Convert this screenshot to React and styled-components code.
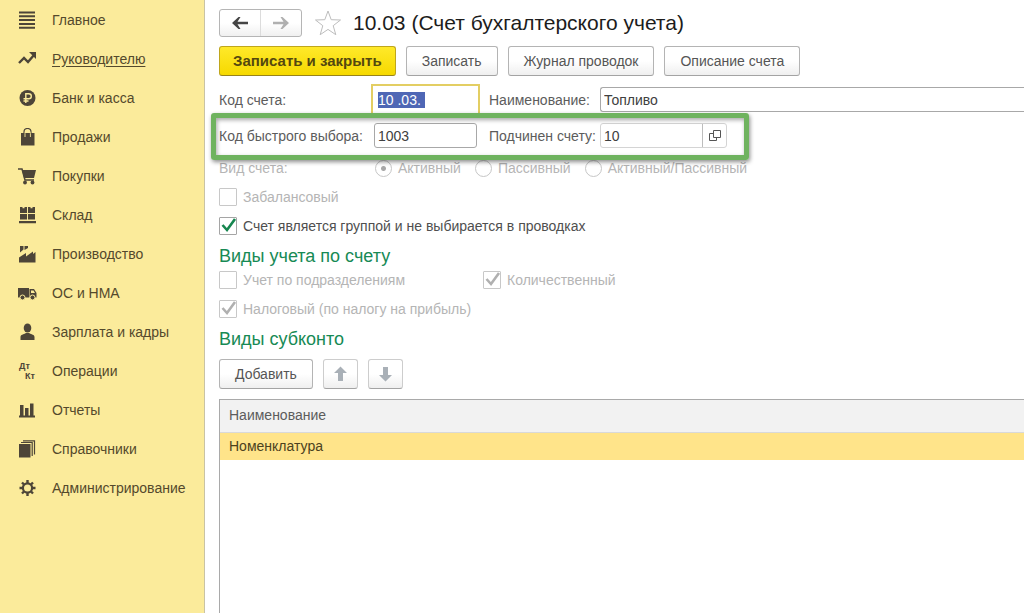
import React, { useEffect, useRef } from 'react';
import styled, { createGlobalStyle } from 'styled-components';

const GlobalStyle = createGlobalStyle`
  * {
    box-sizing: border-box;
  }

  body {
    margin: 0;
    background: #fff;
    color: #4a4a4a;
    font-family: "Liberation Sans", Arial, sans-serif;
    font-size: 14px;
    line-height: 18px;
  }

  button,
  input {
    font: inherit;
    color: inherit;
    margin: 0;
  }
`;

const Page = styled.div`
  display: flex;
  min-height: 100vh;
`;

const Sidebar = styled.nav`
  flex: 0 0 205px;
  background: #fbeb9b;
  border-right: 1px solid #c9c3a4;
`;

const MenuItem = styled.a`
  display: flex;
  align-items: center;
  gap: 15px;
  height: 39px;
  padding-left: 18px;
  color: #54492c;
  text-decoration: ${(props) => (props.$active ? 'underline' : 'none')};
  text-underline-offset: 2px;
  white-space: nowrap;
`;

const MenuIcon = styled.svg`
  flex: none;
  width: 19px;
  height: 18px;
  fill: #4d4538;
`;

const Main = styled.main`
  flex: 1;
  min-width: 0;
  display: flex;
  flex-direction: column;
  padding: 9px 0 0 14px;
`;

const Header = styled.header`
  display: flex;
  align-items: center;
  height: 28px;
`;

const NavButtons = styled.div`
  display: flex;
  width: 83px;
  height: 28px;
  border: 1px solid #b5b5b5;
  border-radius: 3px;
  background: linear-gradient(#fff 50%, #f0f0f0);
`;

const NavButton = styled.button`
  flex: 1;
  display: flex;
  align-items: center;
  justify-content: center;
  padding: 0;
  border: none;
  background: none;

  & + & {
    border-left: 1px solid #dcdcdc;
  }
`;

const StarButton = styled.button`
  display: flex;
  margin-left: 12px;
  padding: 0;
  border: none;
  background: none;
`;

const Title = styled.h1`
  margin: 0 0 0 11px;
  color: #1c1c1c;
  font-size: 21px;
  font-weight: normal;
  line-height: 24px;
  white-space: nowrap;
`;

const Toolbar = styled.div`
  display: flex;
  gap: 10px;
  margin-top: ${(props) => props.$top}px;
`;

const Button = styled.button`
  display: flex;
  align-items: center;
  justify-content: center;
  height: 30px;
  padding: 0 ${(props) => (props.$icon ? 8 : 15)}px;
  border: 1px solid ${(props) => (props.$icon ? '#cdcdcd' : '#b4b4b4')};
  border-bottom-color: #a3a3a3;
  border-radius: 3px;
  background: linear-gradient(#fff 50%, #efefef);
  color: #555;
  white-space: nowrap;
`;

const PrimaryButton = styled(Button)`
  padding: 0 13px;
  border-color: #bfa61c;
  border-bottom-color: #97831b;
  background: linear-gradient(#ffe92a, #f6d900);
  color: #54480f;
  font-size: 15px;
  font-weight: bold;
`;

const Row = styled.div`
  position: relative;
  display: grid;
  grid-template-columns: 155px 103px 123px minmax(0, 1fr);
  align-items: center;
  height: 25px;
  margin-top: 11px;
`;

const Highlight = styled.div`
  position: absolute;
  z-index: 1;
  top: -10px;
  left: -8px;
  width: 538px;
  height: 47px;
  border: 5px solid #6fb35f;
  border-radius: 3px;
  box-shadow: 1px 2px 4px rgba(0, 0, 0, 0.45), inset 1px 2px 4px rgba(0, 0, 0, 0.35);
  pointer-events: none;
`;

const Label = styled.label`
  padding-left: ${(props) => (props.$second ? 12 : 0)}px;
  color: #5c5c5c;
  white-space: nowrap;
`;

const TextInput = styled.input`
  width: 100%;
  height: 25px;
  padding: 0 3px;
  border: 1px solid ${(props) => (props.$current ? '#fff' : '#a8a8a8')};
  border-radius: ${(props) => (props.$current ? 0 : 3)}px;
  background: #fff;
  color: #404040;
  outline: ${(props) => (props.$current ? '2px solid #e3ce63' : 'none')};
  outline-offset: 1px;

  &::selection {
    background: #4f67b5;
    color: #fff;
  }
`;

const WideInput = styled(TextInput)`
  border-right: none;
  border-radius: 3px 0 0 3px;
`;

const FieldGroup = styled.div`
  display: flex;
  width: 127px;
  height: 25px;
  border: 1px solid #d4d4d4;
  border-radius: 3px;
`;

const GroupInput = styled.input`
  flex: 1;
  min-width: 0;
  padding: 0 3px;
  border: none;
  background: none;
  color: #404040;
  outline: none;
`;

const OpenButton = styled.button`
  display: flex;
  align-items: center;
  justify-content: center;
  width: 24px;
  padding: 0;
  border: none;
  border-left: 1px solid #bdbdbd;
  background: none;
`;

const RadioRow = styled.fieldset`
  display: flex;
  align-items: center;
  height: 18px;
  margin: 11px 0 5px;
  padding: 0;
  border: none;
  color: #b5b5b5;
`;

const RadioCaption = styled.span`
  width: 156px;
`;

const RadioLabel = styled.label`
  display: flex;
  align-items: center;
  gap: 6px;
  margin-right: 14px;
  white-space: nowrap;
`;

const Radio = styled.input`
  appearance: none;
  width: 17px;
  height: 17px;
  border: 1px solid #c6c6c6;
  border-radius: 50%;
  background: #fff;

  &:checked {
    background: radial-gradient(circle, #a8a8a8 2px, #fff 3px);
  }
`;

const CheckLabel = styled.label`
  display: flex;
  align-items: center;
  gap: 6px;
  height: 29px;
  color: ${(props) => (props.$disabled ? '#b5b5b5' : '#4f4f4f')};
  white-space: nowrap;
`;

const CheckBox = styled.span`
  position: relative;
  display: flex;
  width: 18px;
  height: 18px;

  input {
    appearance: none;
    width: 18px;
    height: 18px;
    border: 1px solid ${(props) => (props.$disabled ? '#c8c8c8' : '#a5a5a5')};
    border-radius: 1px;
    background: #fff;
  }

  svg {
    position: absolute;
    top: 0;
    left: 0;
    pointer-events: none;
  }
`;

const CheckGrid = styled.div`
  display: grid;
  grid-template-columns: 264px minmax(0, 1fr);
`;

const Section = styled.h2`
  margin: 7px 0 0;
  color: #178a55;
  font-size: 18px;
  font-weight: normal;
  line-height: 18px;
`;

const TableBox = styled.div`
  flex: 1;
  margin-top: 10px;
  border-top: 1px solid #a9a9a9;
  border-left: 1px solid #a9a9a9;
`;

const Table = styled.table`
  width: 100%;
  border-collapse: collapse;

  th,
  td {
    padding: 0 9px;
    text-align: left;
    font-weight: normal;
  }

  th {
    height: 32px;
    padding-bottom: 2px;
    background: #f2f2f2;
    border-bottom: 1px solid #d9d9d9;
    color: #5c5c5c;
  }

  td {
    height: 28px;
    background: #ffe48a;
    color: #4c4220;
  }
`;

const menu = [
  {
    title: 'Главное',
    icon: <path d="M1 .5h16v2H1zM1 4.3h16v2H1zM1 8.100h16v2H1zM1 11.900h16v2H1zM1 15.700h16v2H1z" />,
  },
  {
    title: 'Руководителю',
    active: true,
    icon: (
      <>
        <path d="M1 13l5-5 4 4 6-7" fill="none" stroke="#4d4538" strokeWidth="2.4" />
        <path d="M11 2h7v7z" />
      </>
    ),
  },
  {
    title: 'Банк и касса',
    icon: (
      <>
        <circle cx="9.5" cy="9" r="8" />
        <path
          d="M7.8 14V4.8h3a2.4 2.4 0 0 1 0 5H5.5M5.5 12h5"
          fill="none"
          stroke="#fbeb9b"
          strokeWidth="1.4"
        />
      </>
    ),
  },
  {
    title: 'Продажи',
    icon: (
      <>
        <path d="M3 5h13.500v12.500H3z" />
        <path d="M6 8V4a3.500 3.500 0 0 1 7 0v4" fill="none" stroke="#4d4538" strokeWidth="1.2" />
        <path d="M7 9V5.500a2.700 2.700 0 0 1 5.400 0V9" fill="none" stroke="#fbeb9b" strokeWidth="0.9" />
      </>
    ),
  },
  {
    title: 'Покупки',
    icon: (
      <>
        <path d="M4 3h14l-2 8H6z" />
        <path d="M0 2h4l3 11h9" fill="none" stroke="#4d4538" strokeWidth="1.5" />
        <circle cx="7" cy="15.5" r="1.9" />
        <circle cx="14.5" cy="15.5" r="1.9" />
      </>
    ),
  },
  {
    title: 'Склад',
    icon: (
      <>
        <path d="M2 1h7v6H2zM10 1h7v6h-7zM2 8h7v5.500H2zM10 8h7v5.500h-7zM1 15h17v2.200H1z" />
        <path d="M4.500 1h2v1.200h-2zM12.500 1h2v1.200h-2z" fill="#fbeb9b" />
      </>
    ),
  },
  {
    title: 'Производство',
    icon: <path d="M1 17.500v-5l7-4.500v3.500l7-5V9l2.500-2v10.500zM2 1h3.500v3.500L2 7.500zM6.500 1H10v2L6.500 5z" />,
  },
  {
    title: 'ОС и НМА',
    icon: (
      <>
        <path d="M0 4h11v9.500H0z" />
        <path d="M11.500 5h4.500l2.500 4v4.500h-7z" />
        <path d="M13 6.500h2.500l1.500 2.500h-4z" fill="#fbeb9b" />
        <circle cx="4.5" cy="13.5" r="2.5" stroke="#fbeb9b" />
        <circle cx="14.5" cy="13.5" r="2.5" stroke="#fbeb9b" />
      </>
    ),
  },
  {
    title: 'Зарплата и кадры',
    icon: (
      <>
        <ellipse cx="9.5" cy="5" rx="3.8" ry="4.500" />
        <path d="M2.500 17v-3c0-2.500 3-2.500 5.500-4h3c2.500 1.500 5.500 1.500 5.500 4v3z" />
      </>
    ),
  },
  {
    title: 'Операции',
    icon: (
      <g fontSize="9" fontWeight="bold">
        <text x="1" y="7">Дт</text>
        <text x="7" y="17">Кт</text>
      </g>
    ),
  },
  {
    title: 'Отчеты',
    icon: <path d="M2 4h3.500v11H2zM7 7h3.500v8H7zM12 2.500h3.500V15H12zM1 14.500h16v2H1z" />,
  },
  {
    title: 'Справочники',
    icon: (
      <>
        <path d="M1 4h11.500v13.500H1z" />
        <path d="M3 2.500h11.200V16M5 .8h11.500V14.500" fill="none" stroke="#4d4538" strokeWidth="1.2" />
      </>
    ),
  },
  {
    title: 'Администрирование',
    icon: (
      <g fill="none" stroke="#4d4538">
        <circle cx="9.5" cy="9" r="4.6" strokeWidth="2.2" />
        <path
          d="M9.500 1v3M9.500 14v3M1.500 9h3M14.500 9h3M4 3.500l2 2M13 12.500l2 2M15 3.500l-2 2M6 12.500l-2 2"
          strokeWidth="2.4"
        />
      </g>
    ),
  },
];

const Arrow = ({ color, flip }) => (
  <svg width="18" height="14" viewBox="0 0 18 14">
    <path
      d={
        flip
          ? 'M17 7l-6.500-6H8.500l3 4.700H1v2.600h10.500L8.500 13h2z'
          : 'M1 7l6.500-6h2L6.500 5.700H17v2.600H6.500L9.500 13h-2z'
      }
      fill={color}
    />
  </svg>
);

const MoveArrow = ({ down }) => (
  <svg width="17" height="18" viewBox="0 0 17 18">
    <path
      d={down ? 'M8.500 16.500L2 10h4V2h5v8h4z' : 'M8.500 1.500L15 8h-4v8H6V8H2z'}
      fill="#a9b0b7"
    />
  </svg>
);

const Check = ({ label, checked, disabled }) => (
  <CheckLabel $disabled={disabled}>
    <CheckBox $disabled={disabled}>
      <input type="checkbox" defaultChecked={checked} disabled={disabled} />
      {checked && (
        <svg width="18" height="18" viewBox="0 0 18 18">
          <path
            d="M3.500 8l4.500 5 8-11"
            fill="none"
            stroke={disabled ? '#b0b0b0' : '#16864f'}
            strokeWidth="2.6"
          />
        </svg>
      )}
    </CheckBox>
    {label}
  </CheckLabel>
);

const App = () => {
  const codeRef = useRef(null);

  useEffect(() => {
    codeRef.current.focus();
    codeRef.current.select();
  }, []);

  return (
    <Page>
      <GlobalStyle />
      <Sidebar>
        {menu.map((item) => (
          <MenuItem key={item.title} href="#" $active={item.active}>
            <MenuIcon viewBox="0 0 19 18">{item.icon}</MenuIcon>
            {item.title}
          </MenuItem>
        ))}
      </Sidebar>

      <Main>
        <Header>
          <NavButtons>
            <NavButton aria-label="Назад">
              <Arrow color="#454545" />
            </NavButton>
            <NavButton aria-label="Вперед">
              <Arrow color="#b0b0b0" flip />
            </NavButton>
          </NavButtons>
          <StarButton aria-label="В избранное">
            <svg width="28" height="28" viewBox="0 0 28 28">
              <path
                d="M14 2l3.200 8.700 9.300.3-7.300 5.700 2.600 9L14 20.400l-7.800 5.300 2.600-9L1.500 11l9.300-.3z"
                fill="#fff"
                stroke="#bdbdbd"
              />
            </svg>
          </StarButton>
          <Title>10.03 (Счет бухгалтерского учета)</Title>
        </Header>

        <Toolbar $top={9}>
          <PrimaryButton>Записать и закрыть</PrimaryButton>
          <Button>Записать</Button>
          <Button>Журнал проводок</Button>
          <Button>Описание счета</Button>
        </Toolbar>

        <Row>
          <Label htmlFor="code">Код счета:</Label>
          <TextInput id="code" ref={codeRef} defaultValue="10 .03. " $current />
          <Label htmlFor="name" $second>Наименование:</Label>
          <WideInput id="name" defaultValue="Топливо" />
        </Row>

        <Row>
          <Label htmlFor="quick">Код быстрого выбора:</Label>
          <TextInput id="quick" defaultValue="1003" />
          <Label htmlFor="parent" $second>Подчинен счету:</Label>
          <FieldGroup>
            <GroupInput id="parent" defaultValue="10" />
            <OpenButton aria-label="Открыть">
              <svg width="12" height="12" viewBox="0 0 12 12" fill="none" stroke="#555">
                <path d="M4.500.5h7v7h-7zM4.500 3.500h-4v7h7v-3" />
              </svg>
            </OpenButton>
          </FieldGroup>
          <Highlight />
        </Row>

        <RadioRow disabled>
          <RadioCaption>Вид счета:</RadioCaption>
          <RadioLabel>
            <Radio type="radio" name="kind" defaultChecked />
            Активный
          </RadioLabel>
          <RadioLabel>
            <Radio type="radio" name="kind" />
            Пассивный
          </RadioLabel>
          <RadioLabel>
            <Radio type="radio" name="kind" />
            Активный/Пассивный
          </RadioLabel>
        </RadioRow>

        <Check label="Забалансовый" disabled />
        <Check label="Счет является группой и не выбирается в проводках" checked />

        <Section>Виды учета по счету</Section>
        <CheckGrid>
          <Check label="Учет по подразделениям" disabled />
          <Check label="Количественный" checked disabled />
          <Check label="Налоговый (по налогу на прибыль)" checked disabled />
        </CheckGrid>

        <Section>Виды субконто</Section>
        <Toolbar $top={11}>
          <Button>Добавить</Button>
          <Button $icon aria-label="Вверх">
            <MoveArrow />
          </Button>
          <Button $icon aria-label="Вниз">
            <MoveArrow down />
          </Button>
        </Toolbar>

        <TableBox>
          <Table>
            <thead>
              <tr>
                <th>Наименование</th>
              </tr>
            </thead>
            <tbody>
              <tr>
                <td>Номенклатура</td>
              </tr>
            </tbody>
          </Table>
        </TableBox>
      </Main>
    </Page>
  );
};

export default App;
